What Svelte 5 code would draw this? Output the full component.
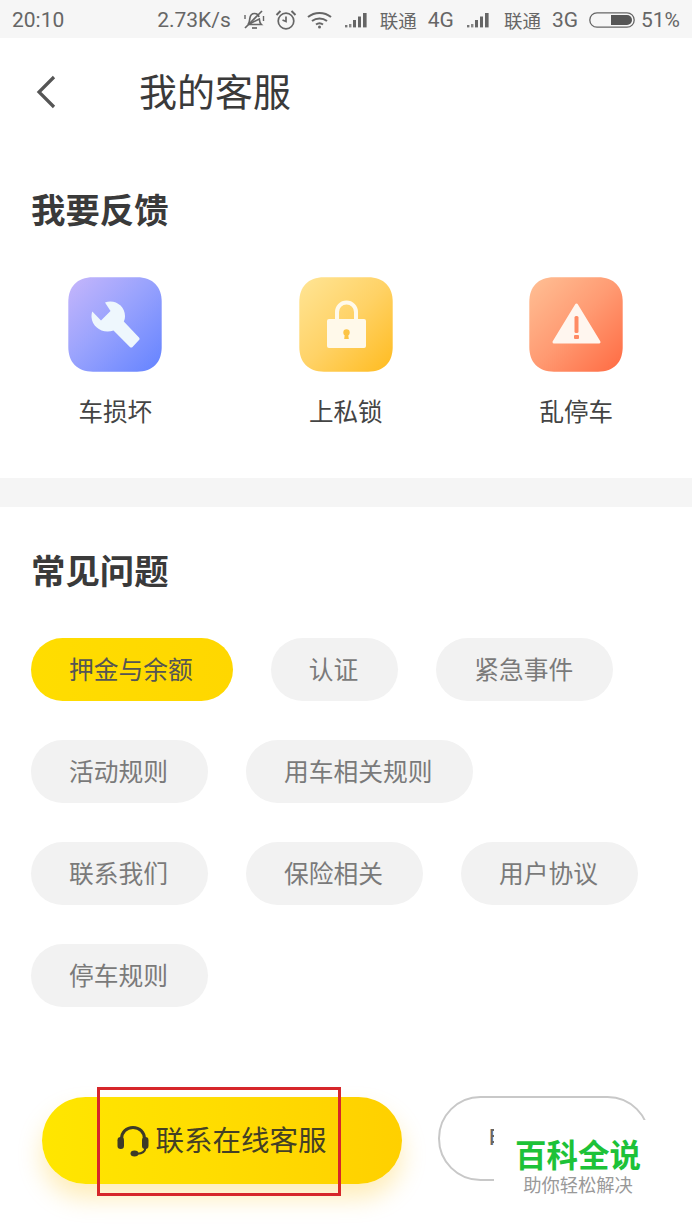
<script>
	const feedback = [
		{ name: '车损坏', kind: 'wrench' },
		{ name: '上私锁', kind: 'lock' },
		{ name: '乱停车', kind: 'warn' }
	];
	const topics = ['押金与余额', '认证', '紧急事件', '活动规则', '用车相关规则', '联系我们', '保险相关', '用户协议', '停车规则'];
	let active = $state(0);
</script>

{#snippet signal()}
	<svg class="signal" width="24" height="16" viewBox="0 0 24 16">
		<rect x="0" y="13" width="2.4" height="2.4" fill="#777" />
		<rect x="4" y="12" width="2.4" height="3.4" fill="#888" />
		<rect x="8" y="8" width="3" height="7.4" fill="#666" />
		<rect x="13" y="4.500" width="3" height="10.900" fill="#666" />
		<rect x="18" y="1" width="3.600" height="14.400" fill="#666" />
	</svg>
{/snippet}

<div class="page">
	<div class="status">
		<span class="time">20:10</span>
		<div class="status-right">
			<span class="speed">2.73K/s</span>
			<svg class="bell" width="24" height="22" viewBox="0 0 24 22" fill="none" stroke="#666" stroke-width="1.7">
				<path d="M6 15.500c1.500-1.500 1.500-3.500 1.800-6 .4-3 2.300-5 4.700-5s4 1.500 4.500 3.500M17.300 10c.2 2.500.6 4.200 2 5.500H6z" />
				<path d="M10 19h5" />
				<path d="M3 19 20 2" />
				<path d="M21.500 7v5M3 6v4" stroke-width="1.400" />
			</svg>
			<svg class="alarm" width="22" height="22" viewBox="0 0 22 22" fill="none" stroke="#666" stroke-width="1.700">
				<circle cx="11" cy="12" r="7.800" />
				<path d="M11 7.500V12.500L7.500 11" />
				<path d="M1.500 6 5.500 2M20.500 6l-4-4" stroke-width="2" />
			</svg>
			<svg class="wifi" width="25" height="18" viewBox="0 0 25 18" fill="none" stroke="#666" stroke-width="2">
				<path d="M1 6c6.500-5.500 16.500-5.500 23 0" />
				<path d="M5 10c4.500-3.500 10.500-3.500 15 0" />
				<path d="M9 13.500c2-1.500 5-1.500 7 0" />
				<circle cx="12.500" cy="16" r="1.500" fill="#666" stroke="none" />
			</svg>
			{@render signal()}
			<span class="carrier first">联通</span>
			<span class="net">4G</span>
			{@render signal()}
			<span class="carrier">联通</span>
			<span class="net">3G</span>
			<svg class="battery" width="46" height="16" viewBox="0 0 46 16">
				<rect x="0.800" y="0.800" width="44.400" height="14.400" rx="7.200" fill="none" stroke="#666" stroke-width="1.300" />
				<path d="M22 3h16a5 5 0 0 1 0 10H22z" fill="#555" />
			</svg>
			<span class="pct">51%</span>
		</div>
	</div>

	<header class="top">
		<svg class="back" width="20" height="34" viewBox="0 0 20 34" fill="none" stroke="#555" stroke-width="3.200">
			<path d="M18 2 3 17l15 15" />
		</svg>
		<h1>我的客服</h1>
	</header>

	<section class="feedback">
		<h2>我要反馈</h2>
		<div class="fb-grid">
			{#each feedback as item}
				<div class="fb-item">
					<svg class="fb-icon" width="94" height="95" viewBox="0 0 94 95">
						<defs>
							<linearGradient id="bg-{item.kind}" x1="0" y1="0" x2="1" y2="1">
								{#if item.kind === 'wrench'}
									<stop offset="0" stop-color="#c6b6fb" />
									<stop offset="0.45" stop-color="#9aa3fd" />
									<stop offset="1" stop-color="#6483ff" />
								{:else if item.kind === 'lock'}
									<stop offset="0" stop-color="#ffe596" />
									<stop offset="0.5" stop-color="#ffd266" />
									<stop offset="1" stop-color="#ffbb1f" />
								{:else}
									<stop offset="0" stop-color="#ffc095" />
									<stop offset="0.5" stop-color="#ff9a72" />
									<stop offset="1" stop-color="#ff6a42" />
								{/if}
							</linearGradient>
						</defs>
						<path
							fill="url(#bg-{item.kind})"
							d="M25 .3H69C85 .3 93.700 10 93.700 25V70C93.700 85 85 94.700 69 94.700H25C9 94.700 .3 85 .3 70V25C.3 10 9 .3 25 .3Z"
						/>
						{#if item.kind === 'wrench'}
							<path fill="#eef7fd" d="M37 25.500C47 22 57 29 57 39c0 2-.4 4-1.200 5.500L71 60.500c.8.800.8 1.800 0 2.600L64.500 70c-.8.800-1.800.8-2.600 0L45.500 53.500C35 57.500 24 50 23.500 40c0-2 .2-4 .8-5.500L33 43.500 42.500 34z" />
						{:else if item.kind === 'lock'}
							<path fill="none" stroke="#fff9ea" stroke-width="4" d="M38 44V35c0-5 4-9.500 9.500-9.500S57 30 57 35v9" />
							<rect x="28" y="42" width="39" height="29" rx="2" fill="#fff9ea" />
							<circle cx="47.500" cy="55.500" r="3.200" fill="#fcc445" />
							<path d="M46 56h3l.8 6h-4.600z" fill="#fcc445" />
						{:else}
							<path fill="#fff6ef" stroke="#fff6ef" stroke-width="3" stroke-linejoin="round" d="M47.500 28 70 65H25z" />
							<rect x="45.500" y="39" width="4" height="17" rx="1.500" fill="#ff8b64" />
							<rect x="45" y="58" width="5" height="4" rx="1" fill="#ff8b64" />
						{/if}
					</svg>
					<span>{item.name}</span>
				</div>
			{/each}
		</div>
	</section>

	<div class="divider"></div>

	<section class="faq">
		<h2>常见问题</h2>
		<div class="chips">
			{#each topics as topic, i}
				<button class="chip" class:on={active === i} onclick={() => (active = i)}>{topic}</button>
			{/each}
		</div>
	</section>

	<div class="actions">
		<button class="online">
			<svg width="32" height="32" viewBox="0 0 32 32" fill="none">
				<path d="M4.500 17V14C4.500 7 9.500 2.500 16 2.500S27.500 7 27.500 14v3" stroke="#3d3a28" stroke-width="3" />
				<rect x="0.500" y="12" width="6.500" height="12" rx="3.200" fill="#3d3a28" />
				<rect x="25" y="12" width="6.500" height="12" rx="3.200" fill="#3d3a28" />
				<path d="M28.500 23c-.5 3.500-3.500 5.500-8 5.800" stroke="#3d3a28" stroke-width="2" />
				<ellipse cx="17.500" cy="28.500" rx="4" ry="3" fill="#3d3a28" />
			</svg>
			<span>联系在线客服</span>
		</button>
		<button class="phone">电</button>
	</div>

	<div class="redbox"></div>
	<div class="mark">
		<strong>百科全说</strong>
		<span>助你轻松解决</span>
	</div>
</div>

<style>
	:global(body) {
		margin: 0;
		background: #fff;
	}
	.page {
		position: relative;
		width: 692px;
		height: 1230px;
		overflow: hidden;
		background: #fff;
		font-family: 'Noto Sans CJK SC', 'Noto Sans', sans-serif;
		color: #3a3a3a;
	}
	.status {
		height: 38px;
		display: flex;
		align-items: center;
		justify-content: space-between;
		padding: 2px 12px 0;
		box-sizing: border-box;
		background: #f6f6f6;
		color: #666;
		font-family: Roboto, 'Noto Sans CJK SC', sans-serif;
		font-size: 21px;
	}
	.status-right {
		display: flex;
		align-items: center;
	}
	.status-right svg {
		flex: none;
	}
	.bell {
		margin-left: 11px;
	}
	.alarm {
		margin-left: 9px;
	}
	.wifi {
		margin-left: 10px;
	}
	.wifi + .signal {
		margin-left: 13px;
	}
	.carrier {
		margin-left: 13px;
		font-size: 18.500px;
		font-family: 'Noto Sans CJK SC', sans-serif;
	}
	.carrier.first {
		margin-left: 11px;
	}
	.net {
		margin-left: 11px;
		margin-right: 13px;
	}
	.battery {
		margin-left: -2px;
	}
	.pct {
		margin-left: 6px;
	}
	.top {
		height: 108px;
		display: flex;
		align-items: center;
		padding: 0 0 0 36px;
		box-sizing: border-box;
	}
	.back {
		margin-right: 83px;
	}
	h1 {
		margin: 0 0 4px;
		font-size: 38px;
		font-weight: 400;
		line-height: 50px;
	}
	h2 {
		margin: 0;
		padding-left: 31px;
		font-size: 34.400px;
		font-weight: 700;
		line-height: 40px;
	}
	.feedback {
		padding: 42px 0 47px;
	}
	.fb-grid {
		display: grid;
		grid-template-columns: repeat(3, 230.500px);
		margin-top: 49px;
	}
	.fb-item {
		display: flex;
		flex-direction: column;
		align-items: center;
		font-size: 24.500px;
		line-height: 40px;
		color: #444;
	}
	.fb-item span {
		margin-top: 19px;
	}
	.fb-icon {
		display: block;
	}
	.divider {
		height: 29px;
		background: #f5f5f5;
	}
	.faq {
		padding-top: 42px;
	}
	.chips {
		display: flex;
		flex-wrap: wrap;
		gap: 39px 38px;
		margin-top: 49px;
		padding: 0 31px;
	}
	.chip {
		height: 63px;
		padding: 0 40px 4px 38px;
		border: 0;
		border-radius: 32px;
		background: #f2f2f2;
		color: #7a7a7a;
		font-family: inherit;
		font-size: 24.750px;
		white-space: nowrap;
	}
	.chip.on {
		background: linear-gradient(90deg, #ffdd00, #ffd700);
		color: #555;
	}
	.actions {
		display: flex;
		align-items: flex-start;
		gap: 36px;
		margin-top: 90px;
		padding-left: 42px;
	}
	.online {
		display: flex;
		align-items: center;
		justify-content: center;
		gap: 6px;
		width: 360px;
		height: 87px;
		padding: 0;
		border: 0;
		border-radius: 44px;
		background: linear-gradient(90deg, #ffe600, #ffdc00 50%, #ffd000);
		box-shadow: 0 14px 24px rgba(255, 190, 0, 0.28);
		color: #444026;
		font-family: inherit;
		font-size: 28.500px;
	}
	.online span {
		margin-bottom: 4px;
	}
	.phone {
		width: 212px;
		height: 85px;
		margin-top: -1px;
		padding: 0 0 4px 47px;
		border: 2px solid #c8c8c8;
		border-radius: 43px;
		background: #fff;
		color: #666;
		font-family: inherit;
		font-size: 28.500px;
		text-align: left;
	}
	.redbox {
		position: absolute;
		left: 97px;
		top: 1087px;
		width: 238px;
		height: 103px;
		border: 3px solid #d6262a;
	}
	.mark {
		position: absolute;
		left: 494px;
		top: 1120px;
		width: 168px;
		height: 87px;
		display: flex;
		flex-direction: column;
		align-items: center;
		background: #fff;
	}
	.mark strong {
		margin-top: 14px;
		font-size: 31.500px;
		line-height: 38px;
		color: #1dc238;
	}
	.mark span {
		font-size: 18.300px;
		line-height: 24px;
		color: #999;
	}
</style>
